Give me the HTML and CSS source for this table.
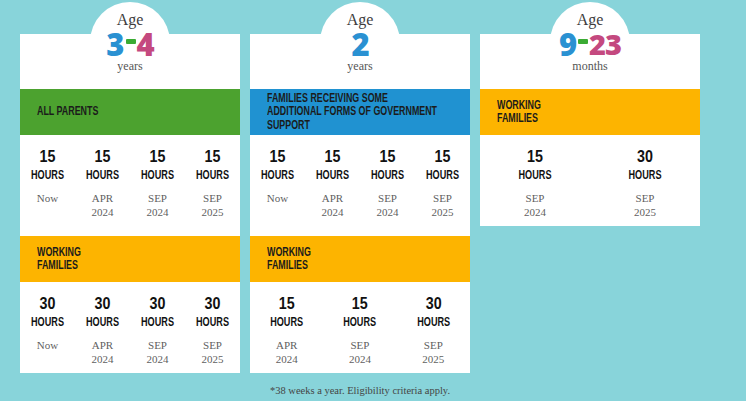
FILE: index.html
```html
<!DOCTYPE html>
<html>
<head>
<meta charset="utf-8">
<link rel="stylesheet" href="styles.css">
</head>
<body>
<main class="page">
  <div class="cards">
    <section class="card">
      <header class="card-head">
        <div class="age">Age</div>
        <div class="range"><span class="blue">3</span><span class="dash"></span><span class="pink">4</span></div>
        <div class="unit">years</div>
      </header>
      <div class="band green"><span class="cond">ALL PARENTS</span></div>
      <div class="hours cols-4 tall">
        <div class="slot"><div class="num">15</div><div class="lbl">HOURS</div><div class="when">Now</div></div>
        <div class="slot"><div class="num">15</div><div class="lbl">HOURS</div><div class="when">APR<br>2024</div></div>
        <div class="slot"><div class="num">15</div><div class="lbl">HOURS</div><div class="when">SEP<br>2024</div></div>
        <div class="slot"><div class="num">15</div><div class="lbl">HOURS</div><div class="when">SEP<br>2025</div></div>
      </div>
      <div class="band yellow"><span class="cond">WORKING<br>FAMILIES</span></div>
      <div class="hours cols-4">
        <div class="slot"><div class="num">30</div><div class="lbl">HOURS</div><div class="when">Now</div></div>
        <div class="slot"><div class="num">30</div><div class="lbl">HOURS</div><div class="when">APR<br>2024</div></div>
        <div class="slot"><div class="num">30</div><div class="lbl">HOURS</div><div class="when">SEP<br>2024</div></div>
        <div class="slot"><div class="num">30</div><div class="lbl">HOURS</div><div class="when">SEP<br>2025</div></div>
      </div>
    </section>

    <section class="card">
      <header class="card-head">
        <div class="age">Age</div>
        <div class="range"><span class="blue">2</span></div>
        <div class="unit">years</div>
      </header>
      <div class="band blue-bg"><span class="cond">FAMILIES RECEIVING SOME<br>ADDITIONAL FORMS OF GOVERNMENT<br>SUPPORT</span></div>
      <div class="hours cols-4 tall">
        <div class="slot"><div class="num">15</div><div class="lbl">HOURS</div><div class="when">Now</div></div>
        <div class="slot"><div class="num">15</div><div class="lbl">HOURS</div><div class="when">APR<br>2024</div></div>
        <div class="slot"><div class="num">15</div><div class="lbl">HOURS</div><div class="when">SEP<br>2024</div></div>
        <div class="slot"><div class="num">15</div><div class="lbl">HOURS</div><div class="when">SEP<br>2025</div></div>
      </div>
      <div class="band yellow"><span class="cond">WORKING<br>FAMILIES</span></div>
      <div class="hours cols-3">
        <div class="slot"><div class="num">15</div><div class="lbl">HOURS</div><div class="when">APR<br>2024</div></div>
        <div class="slot"><div class="num">15</div><div class="lbl">HOURS</div><div class="when">SEP<br>2024</div></div>
        <div class="slot"><div class="num">30</div><div class="lbl">HOURS</div><div class="when">SEP<br>2025</div></div>
      </div>
    </section>

    <section class="card">
      <header class="card-head">
        <div class="age">Age</div>
        <div class="range"><span class="blue">9</span><span class="dash"></span><span class="pink small">23</span></div>
        <div class="unit">months</div>
      </header>
      <div class="band yellow"><span class="cond">WORKING<br>FAMILIES</span></div>
      <div class="hours cols-2">
        <div class="slot"><div class="num">15</div><div class="lbl">HOURS</div><div class="when">SEP<br>2024</div></div>
        <div class="slot"><div class="num">30</div><div class="lbl">HOURS</div><div class="when">SEP<br>2025</div></div>
      </div>
    </section>
  </div>
  <p class="note">*38 weeks a year. Eligibility criteria apply.</p>
</main>
</body>
</html>
```

FILE: styles.css
```css
html, body {
  margin: 0;
  padding: 0;
}
body {
  background: #88d4da;
  width: 746px;
  height: 401px;
  overflow: hidden;
}
.page {
  width: 680px;
  padding: 34px 0 0 20px;
}
.cards {
  display: flex;
  gap: 10px;
  align-items: flex-start;
}
.card {
  position: relative;
  width: 220px;
  background: #fff;
}
.card::before {
  content: "";
  position: absolute;
  top: -32px;
  left: 70px;
  width: 80px;
  height: 80px;
  border-radius: 50%;
  background: #fff;
  z-index: 0;
}
.card-head {
  position: relative;
  z-index: 1;
  height: 55px;
  display: flex;
  flex-direction: column;
  align-items: center;
}
.age {
  margin-top: -23px;
  font-family: "Liberation Serif", serif;
  font-size: 16px;
  line-height: 17px;
  color: #3d3d3d;
}
.range {
  height: 28px;
  margin-top: 2px;
  display: flex;
  align-items: center;
  font-family: "Open Sans", "Noto Sans", sans-serif;
  font-weight: 800;
  font-size: 31px;
  line-height: 28px;
  letter-spacing: -1px;
}
.blue { color: #2a91d2; }
.pink { color: #c4497f; }
.pink.small { font-size: 29px; }
.dash {
  display: inline-block;
  width: 10px;
  height: 5px;
  background: #3aab33;
  margin: 0 1px 6px 2px;
  border-radius: 1px;
}
.unit {
  font-family: "Liberation Serif", serif;
  font-size: 12px;
  line-height: 13px;
  color: #555;
  margin-top: 2px;
}
.band {
  height: 46px;
  padding-left: 17px;
  display: flex;
  align-items: center;
  font-family: "Liberation Sans", "Roboto", sans-serif;
  font-weight: 700;
  font-size: 12px;
  line-height: 13.5px;
  color: #1b1b1b;
}
.cond {
  display: inline-block;
  white-space: nowrap;
  transform: scaleX(0.74);
  transform-origin: left center;
}
.green { background: #4ca22f; }
.blue-bg { background: #2092d1; }
.yellow { background: #fdb400; }
.hours {
  display: grid;
  height: 91px;
  box-sizing: border-box;
  padding-top: 12px;
  text-align: center;
}
.hours.tall { height: 101px; }
.cols-4 { grid-template-columns: repeat(4, 1fr); }
.cols-3 { grid-template-columns: repeat(3, 1fr); }
.cols-2 { grid-template-columns: repeat(2, 1fr); }
.num {
  font-family: "Liberation Sans", "Roboto", sans-serif;
  font-weight: 700;
  font-size: 17px;
  line-height: 20px;
  color: #111;
  transform: scaleX(0.84);
}
.lbl {
  font-family: "Liberation Sans", "Roboto", sans-serif;
  font-weight: 700;
  font-size: 12px;
  line-height: 14px;
  color: #111;
  margin-top: 1px;
  transform: scaleX(0.76);
}
.when {
  margin-top: 9px;
  font-family: "Liberation Serif", serif;
  font-size: 11px;
  line-height: 14px;
  color: #5f5f5f;
}
.note {
  margin: 11px 0 0;
  text-align: center;
  font-family: "Liberation Serif", serif;
  font-size: 10.5px;
  line-height: 14px;
  color: #454545;
}
```
